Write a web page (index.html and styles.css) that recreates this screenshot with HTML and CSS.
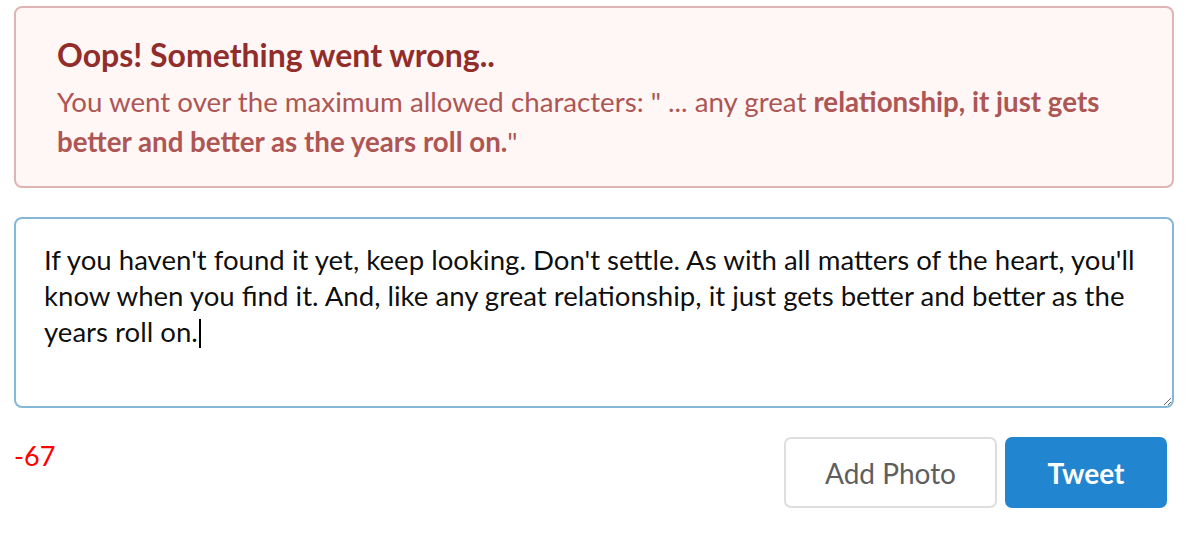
FILE: index.html
```html
<!DOCTYPE html>
<html>
<head>
<meta charset="utf-8">
<link rel="stylesheet" href="styles.css">
</head>
<body>
<div class="page">
  <div class="alert">
    <div class="alert-header">Oops! Something went wrong..</div>
    <p class="alert-body">You went over the maximum allowed characters: " ... any great <b>relationship, it just gets better and better as the years roll on.</b>"</p>
  </div>
  <div class="composer-wrap">
    <textarea class="composer" id="composer">If you haven't found it yet, keep looking. Don't settle. As with all matters of the heart, you'll know when you find it. And, like any great relationship, it just gets better and better as the years roll on.</textarea>
    <span class="caret"></span>
  </div>
  <div class="footer">
    <span class="counter">-67</span>
    <div class="actions">
      <button class="btn btn-secondary">Add Photo</button>
      <button class="btn btn-primary">Tweet</button>
    </div>
  </div>
</div>
</body>
</html>
```
FILE: styles.css
```css
html, body {
  margin: 0;
  padding: 0;
  background: #ffffff;
}
.page {
  font-family: Lato, "Noto Sans", sans-serif;
  padding: 6px 22px 0 14px;
}
.alert {
  background: #fff6f6;
  border: 2px solid #e0b4b4;
  border-radius: 8px;
  padding: 28px 41px 0 41px;
  box-sizing: border-box;
  height: 182px;
}
.alert-header {
  color: #912d2b;
  font-weight: 700;
  font-size: 32px;
  line-height: 38px;
}
.alert-body {
  margin: 8px 0 0 0;
  color: #ad5654;
  font-size: 27.7px;
  line-height: 40px;
}
.alert-body b {
  font-weight: 700;
}
.composer-wrap {
  position: relative;
  margin-top: 29px;
}
.composer {
  display: block;
  box-sizing: border-box;
  width: 100%;
  height: 191px;
  border: 2px solid #85b7d9;
  border-radius: 8px;
  padding: 23px 28px;
  font-family: Lato, "Noto Sans", sans-serif;
  font-size: 27.6px;
  line-height: 36px;
  color: rgba(0,0,0,0.95);
  outline: none;
  resize: vertical;
}
.caret {
  position: absolute;
  left: 185px;
  top: 102px;
  width: 2px;
  height: 29px;
  background: #000000;
}
.footer {
  display: flex;
  justify-content: space-between;
  align-items: flex-start;
  margin-top: 29px;
}
.counter {
  color: #ff0000;
  font-size: 27px;
  line-height: 30px;
  margin-top: 4px;
}
.actions {
  display: flex;
  gap: 8px;
  padding-right: 7px;
}
.btn {
  font-family: Lato, "Noto Sans", sans-serif;
  font-size: 28px;
  height: 71px;
  border-radius: 7px;
  cursor: pointer;
  box-sizing: border-box;
}
.btn-secondary {
  width: 213px;
  background: #ffffff;
  border: 2px solid #dedede;
  color: #5e5e5e;
}
.btn-primary {
  width: 162px;
  background: #2185d0;
  border: none;
  color: #ffffff;
  font-weight: 700;
}
```
